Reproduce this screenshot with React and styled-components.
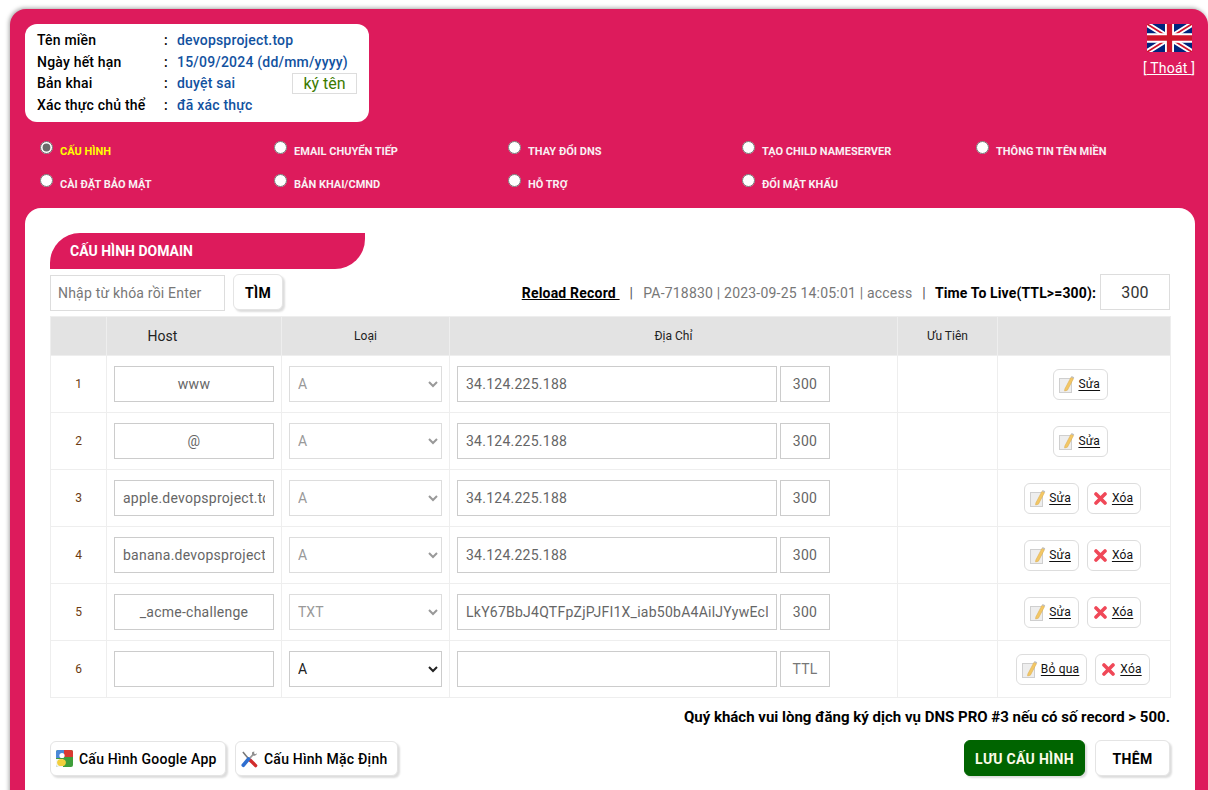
import React from "react";
import styled, { createGlobalStyle } from "styled-components";

const GlobalStyle = createGlobalStyle`
  html, body {
    margin: 0;
    padding: 0;
    background: #ffffff;
    overflow: hidden;
    height: 790px;
    font-family: Roboto, "Liberation Sans", sans-serif;
    color: #000;
  }
  * { box-sizing: border-box; }
`;

const PINK = "#dd1b5c";

const Page = styled.div`
  height: 790px;
  overflow: hidden;
  padding: 9px 0 0 10px;
`;
const Panel = styled.div`
  width: 1198px;
  height: 900px;
  background: ${PINK};
  border-radius: 16px 16px 0 0;
  box-shadow: -1px -1px 4px rgba(0, 0, 0, 0.35);
  padding: 15px 13px 0 15px;
`;
const TopRow = styled.div`
  display: flex;
  justify-content: space-between;
  align-items: flex-start;
`;
const InfoCard = styled.div`
  width: 344px;
  height: 98px;
  background: #fff;
  border-radius: 12px;
  padding: 5px 12px;
`;
const InfoRow = styled.div`
  display: grid;
  grid-template-columns: 127px 13px auto 1fr;
  align-items: center;
  height: 21.7px;
  font-size: 14px;
  font-weight: 500;
  letter-spacing: 0.2px;
`;
const InfoValue = styled.span`
  color: #12529f;
`;
const SignBox = styled.span`
  justify-self: end;
  width: 65px;
  height: 21px;
  border: 1px solid #ddd;
  color: #3c7a00;
  font-size: 16px;
  font-weight: 400;
  letter-spacing: 0;
  line-height: 19px;
  text-align: center;
`;
const LangBox = styled.div`
  display: flex;
  flex-direction: column;
  align-items: center;
  gap: 8px;
  width: 54px;
  margin-right: -1px;
  font-size: 14px;
  letter-spacing: 0.2px;
  color: #fff;
`;
const ExitLink = styled.div`
  white-space: nowrap;
  line-height: 17px;
  span { text-decoration: underline; }
`;
const NavGrid = styled.div`
  display: grid;
  grid-template-columns: repeat(5, 234px);
  grid-auto-rows: 33px;
  padding: 15px 0 0 15px;
  height: 86px;
`;
const NavItem = styled.label`
  display: flex;
  align-items: flex-start;
  gap: 7px;
  font-size: 11px;
  font-weight: 700;
  line-height: 30px;
  color: ${(p) => (p.$active ? "#ffff00" : "#f9f0f3")};
  white-space: nowrap;
  input {
    width: 13px;
    height: 13px;
    margin: 4px 0 0;
    accent-color: #6b6b6b;
  }
`;
const Content = styled.div`
  background: #fff;
  border-radius: 16px 16px 0 0;
  height: 700px;
  padding: 25px 25px 0;
`;
const TitleTab = styled.div`
  width: 315px;
  height: 36px;
  background: ${PINK};
  border-radius: 30px 0 30px 0;
  color: #fff;
  font-size: 14px;
  font-weight: 700;
  line-height: 36px;
  padding-left: 20px;
`;
const Toolbar = styled.div`
  display: flex;
  align-items: flex-start;
  height: 47px;
  padding-top: 5px;
`;
const SearchInput = styled.input`
  width: 175px;
  height: 36px;
  margin-top: 1px;
  border: 1px solid #ddd;
  padding: 0 7px;
  font: 400 14px Roboto, sans-serif;
  letter-spacing: 0.2px;
  outline: none;
  &::placeholder { color: #777; }
`;
const ShadowButton = styled.button`
  height: 36px;
  border: 1px solid #e4e4e4;
  border-radius: 6px;
  background: #fff;
  box-shadow: 2px 2px 2px #ddd;
  font: ${(p) => (p.$plain ? 500 : 700)} 14px Roboto, sans-serif;
  letter-spacing: ${(p) => (p.$plain ? 0.22 : 0.3)}px;
  color: #000;
  padding: 2px 0 0;
  width: ${(p) => p.$width}px;
`;
const SearchButton = styled(ShadowButton)`
  margin-left: 8px;
`;
const ToolInfo = styled.div`
  margin-left: auto;
  display: flex;
  align-items: center;
  height: 38px;
  font-size: 14px;
  letter-spacing: 0.2px;
  white-space: nowrap;
  color: #777;
`;
const ReloadLink = styled.span`
  color: #000;
  font-weight: 700;
  letter-spacing: 0.2px;
  text-decoration: underline;
  white-space: pre;
`;
const Sep = styled.span`
  margin: 0 ${(p) => p.$right}px 0 ${(p) => p.$left}px;
  color: #555;
`;
const TtlLabel = styled.span`
  color: #000;
  font-weight: 700;
  letter-spacing: 0.13px;
`;
const TtlInput = styled.input`
  width: 70px;
  height: 36px;
  margin-left: 4px;
  align-self: flex-start;
  border: 1px solid #ddd;
  font: 400 16px Roboto, sans-serif;
  letter-spacing: 0.2px;
  color: #333;
  text-align: center;
  outline: none;
`;
const Table = styled.table`
  width: 1119.5px;
  table-layout: fixed;
  border-collapse: collapse;
  font-size: 12px;
`;
const Th = styled.th`
  height: 39px;
  background: #e3e3e3;
  border: 1px solid #eee;
  font-size: ${(p) => (p.$big ? 14 : 12)}px;
  font-weight: 400;
  color: #222;
  padding: ${(p) => (p.$big ? "0 63px 0 0" : "0")};
`;
const Td = styled.td`
  height: 57px;
  border: 1px solid #eee;
  padding: 0;
`;
const IndexCell = styled(Td)`
  text-align: center;
  color: #6b3a10;
`;
const CellInner = styled.div`
  display: flex;
  align-items: center;
  justify-content: ${(p) => (p.$center ? "center" : "flex-start")};
  gap: ${(p) => p.$gap || 0}px;
  padding: 0 ${(p) => p.$right || 7}px 0 7px;
`;
const FieldInput = styled.input`
  width: ${(p) => p.$width}px;
  height: 36px;
  border: 1px solid #ccc;
  padding: 0 8px;
  font: 400 14px Roboto, sans-serif;
  letter-spacing: 0.25px;
  color: #666;
  text-align: ${(p) => (p.$center ? "center" : "left")};
  outline: none;
  background: #fff;
  &::placeholder { color: #777; }
`;
const TypeSelect = styled.select`
  width: 153px;
  height: 36px;
  border: 1px solid ${(p) => (p.disabled ? "#ddd" : "#ccc")};
  padding: 0 4px;
  font: 400 14px Roboto, sans-serif;
  color: ${(p) => (p.disabled ? "#999" : "#222")};
  background: #fff;
  opacity: 1;
  outline: none;
`;
const ActionButton = styled.span`
  display: inline-flex;
  align-items: center;
  height: 31px;
  padding: 0 7px 0 5px;
  gap: 3px;
  border: 1px solid #ddd;
  border-radius: 6px;
  background: #fff;
  font-size: 12px;
  letter-spacing: 0.2px;
  color: #111;
  white-space: nowrap;
  u { text-underline-offset: 2px; }
  svg { flex: none; }
`;
const Note = styled.div`
  text-align: right;
  font-size: 15px;
  font-weight: 700;
  line-height: 20px;
  margin-top: 9px;
`;
const Footer = styled.div`
  display: flex;
  align-items: flex-start;
  gap: 10px;
  margin-top: 13px;
`;
const FooterIconButton = styled(ShadowButton)`
  display: inline-flex;
  align-items: center;
  justify-content: flex-start;
  gap: 6px;
  height: 35px;
  margin-top: 1px;
  margin-right: -1px;
  padding: 0 0 0 5px;
  white-space: nowrap;
`;
const SaveButton = styled(ShadowButton)`
  margin-left: auto;
  background: #006400;
  border-color: #006400;
  color: #fbfbe8;
`;

const Flag = () => (
  <svg width="45" height="28" viewBox="0 0 60 36" preserveAspectRatio="none">
    <rect width="60" height="36" fill="#00247d" />
    <path d="M0 0 60 36M60 0 0 36" stroke="#fff" strokeWidth="7" />
    <path d="M0 0 60 36M60 0 0 36" stroke="#cf142b" strokeWidth="2.4" />
    <path d="M30 0V36M0 18H60" stroke="#fff" strokeWidth="12" />
    <path d="M30 0V36M0 18H60" stroke="#cf142b" strokeWidth="7" />
  </svg>
);

const NoteIcon = () => (
  <svg width="16" height="17" viewBox="0 0 16 17">
    <rect x="0.5" y="2.5" width="12" height="14" fill="#eeeeee" stroke="#cfcfcf" />
    <path d="M5.8 13 12 1.2l2.6 1.3L8.4 14.2 5.6 15z" fill="#f3c765" stroke="#d9a848" strokeWidth="0.5" />
    <path d="M12 1.2 12.6 0l2.6 1.3-.6 1.2z" fill="#bdbdbd" />
  </svg>
);

const CrossIconSvg = styled.svg`
  margin: 0 2px 0 1px;
`;
const CrossIcon = () => (
  <CrossIconSvg width="13" height="13" viewBox="0 0 13 13">
    <path d="M2 2 11 11M11 2 2 11" stroke="#f04858" strokeWidth="3.6" strokeLinecap="round" />
  </CrossIconSvg>
);

const GoogleIcon = () => (
  <svg width="17" height="17" viewBox="0 0 17 17">
    <rect width="17" height="17" rx="2" fill="#3f9e3a" />
    <path d="M0 2a2 2 0 0 1 2-2h6v8H0z" fill="#4a88d8" />
    <path d="M8 0h7a2 2 0 0 1 2 2v5H8z" fill="#d93a32" />
    <path d="M0 9h7v8H2a2 2 0 0 1-2-2z" fill="#f4f4f4" />
    <ellipse cx="5.5" cy="12.5" rx="4.4" ry="3.6" fill="#f2cf3c" />
    <circle cx="6" cy="5.5" r="2.6" fill="#fff" />
  </svg>
);

const ToolsIcon = () => (
  <svg width="17" height="18" viewBox="0 0 18 18">
    <path d="M2 1.5 10 11" stroke="#777" strokeWidth="1.6" />
    <path d="M9.5 10 15.5 16" stroke="#d22c2c" strokeWidth="3.6" strokeLinecap="round" />
    <path d="M13.5 3.5 3 15" stroke="#9a9a9a" strokeWidth="1.8" />
    <path d="M8 9 2.4 15.6" stroke="#2f6fd0" strokeWidth="3.8" strokeLinecap="round" />
    <path d="M12 1.5a3 3 0 0 0 1.5 4 3 3 0 0 0 3.5-2.5l-2 1-1.2-1 .4-2z" fill="#8c8c8c" />
  </svg>
);

const infoRows = [
  ["Tên miền", "devopsproject.top"],
  ["Ngày hết hạn", "15/09/2024 (dd/mm/yyyy)"],
  ["Bản khai", "duyệt sai", true],
  ["Xác thực chủ thể", "đã xác thực"],
];

const navItems = [
  "CẤU HÌNH",
  "EMAIL CHUYỂN TIẾP",
  "THAY ĐỔI DNS",
  "TẠO CHILD NAMESERVER",
  "THÔNG TIN TÊN MIỀN",
  "CÀI ĐẶT BẢO MẬT",
  "BẢN KHAI/CMND",
  "HỖ TRỢ",
  "ĐỔI MẬT KHẨU",
];

const records = [
  { host: "www", type: "A", addr: "34.124.225.188", center: true },
  { host: "@", type: "A", addr: "34.124.225.188", center: true },
  { host: "apple.devopsproject.top", type: "A", addr: "34.124.225.188", del: true },
  { host: "banana.devopsproject.top", type: "A", addr: "34.124.225.188", del: true },
  {
    host: "_acme-challenge",
    type: "TXT",
    addr: "LkY67BbJ4QTFpZjPJFI1X_iab50bA4AilJYywEclKxQ",
    center: true,
    del: true,
  },
];

const RecordRow = ({ index, record }) => (
  <tr>
    <IndexCell>{index}</IndexCell>
    <Td>
      <CellInner>
        <FieldInput $width={160} $center={record.center} readOnly value={record.host} />
      </CellInner>
    </Td>
    <Td>
      <CellInner>
        <TypeSelect disabled value={record.type} onChange={() => {}}>
          <option>A</option>
          <option>TXT</option>
        </TypeSelect>
      </CellInner>
    </Td>
    <Td>
      <CellInner $gap={3}>
        <FieldInput $width={320} readOnly value={record.addr} />
        <FieldInput $width={50} $center readOnly value="300" />
      </CellInner>
    </Td>
    <Td />
    <Td>
      <CellInner $center $gap={8} $right={record.del ? 9 : 13}>
        <ActionButton>
          <NoteIcon />
          <u>Sửa</u>
        </ActionButton>
        {record.del && (
          <ActionButton>
            <CrossIcon />
            <u>Xóa</u>
          </ActionButton>
        )}
      </CellInner>
    </Td>
  </tr>
);

export default function App() {
  return (
    <Page>
      <GlobalStyle />
      <Panel>
        <TopRow>
          <InfoCard>
            {infoRows.map(([label, value, sign]) => (
              <InfoRow key={label}>
                <span>{label}</span>
                <span>:</span>
                <InfoValue>{value}</InfoValue>
                {sign && <SignBox>ký tên</SignBox>}
              </InfoRow>
            ))}
          </InfoCard>
          <LangBox>
            <Flag />
            <ExitLink>
              [<span> Thoát </span>]
            </ExitLink>
          </LangBox>
        </TopRow>
        <NavGrid>
          {navItems.map((item, i) => (
            <NavItem key={item} $active={i === 0}>
              <input type="radio" name="nav" defaultChecked={i === 0} />
              {item}
            </NavItem>
          ))}
        </NavGrid>
        <Content>
          <TitleTab>CẤU HÌNH DOMAIN</TitleTab>
          <Toolbar>
            <SearchInput placeholder="Nhập từ khóa rồi Enter" />
            <SearchButton $width={50}>TÌM</SearchButton>
            <ToolInfo>
              <ReloadLink>Reload Record </ReloadLink>
              <Sep $left={10} $right={10}>|</Sep>
              PA-718830 | 2023-09-25 14:05:01 | access
              <Sep $left={10} $right={9}>|</Sep>
              <TtlLabel>Time To Live(TTL&gt;=300):</TtlLabel>
              <TtlInput readOnly value="300" />
            </ToolInfo>
          </Toolbar>
          <Table>
            <colgroup>
              <col style={{ width: 56 }} />
              <col style={{ width: 175 }} />
              <col style={{ width: 168 }} />
              <col style={{ width: 448 }} />
              <col style={{ width: 100 }} />
              <col style={{ width: 172.5 }} />
            </colgroup>
            <thead>
              <tr>
                <Th />
                <Th $big>Host</Th>
                <Th>Loại</Th>
                <Th>Địa Chỉ</Th>
                <Th>Ưu Tiên</Th>
                <Th />
              </tr>
            </thead>
            <tbody>
              {records.map((record, i) => (
                <RecordRow key={record.host} index={i + 1} record={record} />
              ))}
              <tr>
                <IndexCell>6</IndexCell>
                <Td>
                  <CellInner>
                    <FieldInput $width={160} />
                  </CellInner>
                </Td>
                <Td>
                  <CellInner>
                    <TypeSelect>
                      <option>A</option>
                      <option>TXT</option>
                    </TypeSelect>
                  </CellInner>
                </Td>
                <Td>
                  <CellInner $gap={3}>
                    <FieldInput $width={320} />
                    <FieldInput $width={50} $center placeholder="TTL" />
                  </CellInner>
                </Td>
                <Td />
                <Td>
                  <CellInner $center $gap={8} $right={9}>
                    <ActionButton>
                      <NoteIcon />
                      <u>Bỏ qua</u>
                    </ActionButton>
                    <ActionButton>
                      <CrossIcon />
                      <u>Xóa</u>
                    </ActionButton>
                  </CellInner>
                </Td>
              </tr>
            </tbody>
          </Table>
          <Note>Quý khách vui lòng đăng ký dịch vụ DNS PRO #3 nếu có số record &gt; 500.</Note>
          <Footer>
            <FooterIconButton $width={176} $plain>
              <GoogleIcon />
              Cấu Hình Google App
            </FooterIconButton>
            <FooterIconButton $width={163} $plain>
              <ToolsIcon />
              Cấu Hình Mặc Định
            </FooterIconButton>
            <SaveButton $width={121}>LƯU CẤU HÌNH</SaveButton>
            <ShadowButton $width={75}>THÊM</ShadowButton>
          </Footer>
        </Content>
      </Panel>
    </Page>
  );
}
